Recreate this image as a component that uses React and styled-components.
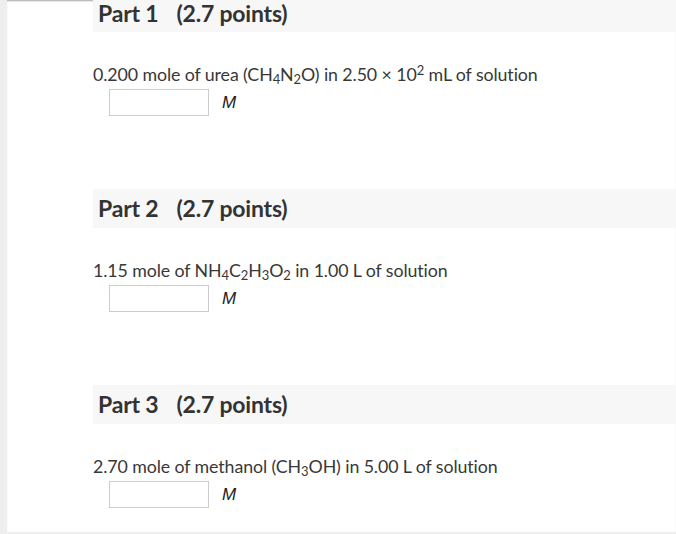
import React from "react";
import styled, { createGlobalStyle } from "styled-components";

const GlobalStyle = createGlobalStyle`
	html, body {
		margin: 0;
		padding: 0;
		background: #eeeeee;
		overflow: hidden;
	}
	body {
		font-family: Lato, "Open Sans", "Liberation Sans", sans-serif;
		color: #333333;
	}
`;

const Page = styled.div`
	margin-left: 7px;
	height: 532px;
	background: #ffffff;
	overflow: hidden;
	box-shadow: inset 0 2px 2px -1px rgba(0, 0, 0, 0.35);
	padding-left: 86px;
	box-sizing: border-box;
`;

const Part = styled.section`
	padding-bottom: 73px;
`;

// the first header is scrolled partly out of view in the screenshot
const PartHeader = styled.h2`
	margin: 0;
	height: ${(p) => (p.$cropped ? "32px" : "39px")};
	line-height: ${(p) => (p.$cropped ? "26px" : "39px")};
	background: #f7f7f7;
	padding-left: 5px;
	font-size: 23px;
	font-weight: 700;
	color: #333333;
	letter-spacing: -0.2px;
	display: flex;
	gap: 18px;
`;

const Question = styled.p`
	margin: 30px 0 3px;
	font-size: 17.8px;
	line-height: 24px;
	color: #383838;
	letter-spacing: -0.1px;
`;

const Sub = styled.sub`
	font-size: 13px;
	line-height: 0;
	vertical-align: -3px;
`;

const Sup = styled.sup`
	font-size: 13px;
	line-height: 0;
	vertical-align: 6px;
`;

const AnswerRow = styled.div`
	display: flex;
	align-items: center;
	gap: 13px;
	padding-left: 16px;
`;

const AnswerBox = styled.input`
	width: 100px;
	height: 27px;
	box-sizing: border-box;
	border: 1px solid #cccccc;
	background: #ffffff;
	margin: 0;
	padding: 0 4px;
	outline: none;
`;

const Unit = styled.span`
	font-family: "Liberation Sans", Arial, sans-serif;
	font-style: italic;
	font-size: 17px;
	color: #222222;
	margin-top: 1px;
`;

const parts = [
	{
		n: 1,
		q: (
			<>
				0.200 mole of urea (CH<Sub>4</Sub>N<Sub>2</Sub>O) in 2.50 × 10<Sup>2</Sup> mL of solution
			</>
		),
	},
	{
		n: 2,
		q: (
			<>
				1.15 mole of NH<Sub>4</Sub>C<Sub>2</Sub>H<Sub>3</Sub>O<Sub>2</Sub> in 1.00 L of solution
			</>
		),
	},
	{
		n: 3,
		q: (
			<>
				2.70 mole of methanol (CH<Sub>3</Sub>OH) in 5.00 L of solution
			</>
		),
	},
];

const App = () => {
	return (
		<>
			<GlobalStyle />
			<Page>
				{parts.map((p, i) => (
					<Part key={p.n}>
						<PartHeader $cropped={i === 0}>
							<span>Part {p.n}</span>
							<span>(2.7 points)</span>
						</PartHeader>
						<Question>{p.q}</Question>
						<AnswerRow>
							<AnswerBox type="text" />
							<Unit>M</Unit>
						</AnswerRow>
					</Part>
				))}
			</Page>
		</>
	);
};

export default App;
